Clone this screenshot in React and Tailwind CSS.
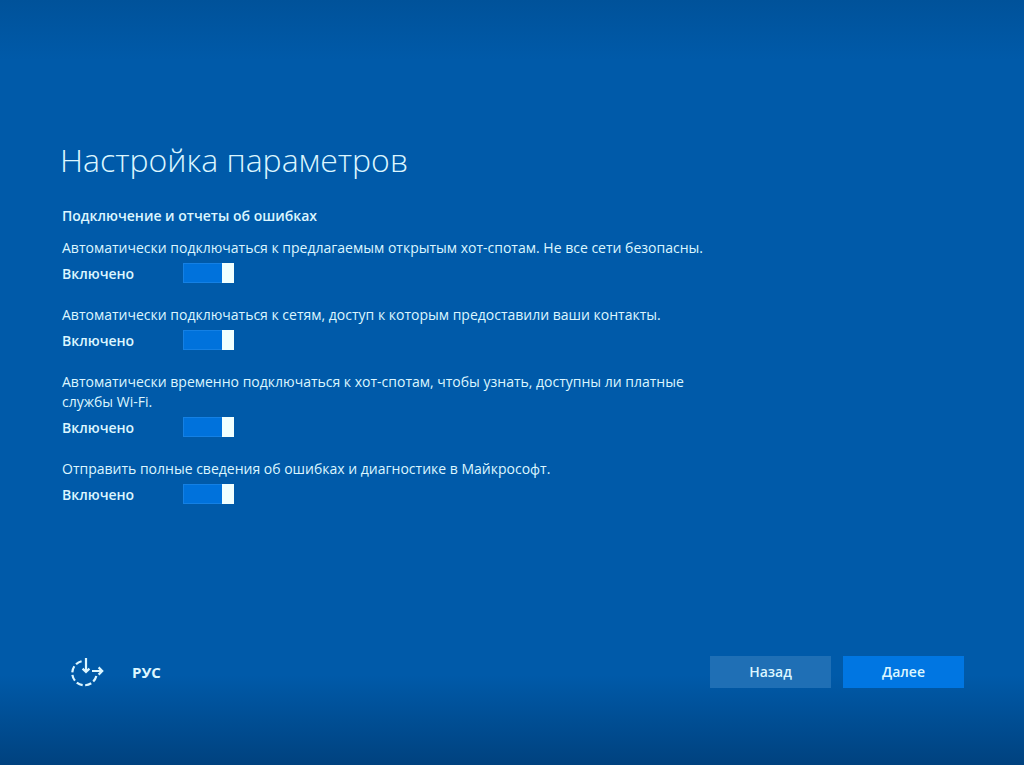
import { useState } from 'react';

const SETTINGS = [
    { id: 'hotspots', text: 'Автоматически подключаться к предлагаемым открытым хот-спотам. Не все сети безопасны.' },
    { id: 'contacts', text: 'Автоматически подключаться к сетям, доступ к которым предоставили ваши контакты.' },
    { id: 'paid', text: 'Автоматически временно подключаться к хот-спотам, чтобы узнать, доступны ли платные службы Wi-Fi.' },
    { id: 'reports', text: 'Отправить полные сведения об ошибках и диагностике в Майкрософт.' },
];

const ToggleSetting = ({ id, text }) => {
    const [on, setOn] = useState(true);

    return (
        <div>
            <p id={`${id}-text`}>{text}</p>
            <div className="mt-[5px] flex items-start">
                <label htmlFor={id} className="w-[121px] pt-px font-semibold">
                    {on ? 'Включено' : 'Отключено'}
                </label>
                <input
                    id={id}
                    type="checkbox"
                    role="switch"
                    aria-describedby={`${id}-text`}
                    checked={on}
                    onChange={(e) => setOn(e.target.checked)}
                    className="flex h-5 w-[51px] cursor-pointer appearance-none border border-[#1480e4] bg-[#004a91] before:-my-px before:-ml-px before:w-3 before:bg-[#f0ffff] checked:justify-end checked:bg-[#0072dc] checked:before:-mr-px checked:before:ml-0"
                />
            </div>
        </div>
    );
};

const EaseOfAccessIcon = () => (
    <svg viewBox="0 0 36 32" className="h-8 w-9" fill="none" stroke="currentColor" strokeWidth="2.2" aria-hidden="true">
        {/* Dashed ring, open in the upper right corner */}
        <path d="M13.6 5.2A12.2 12.2 0 1 0 28.5 19" strokeDasharray="6.4 2.6" />
        <path d="M18 2v13.5M14.6 12.6l3.4 3.4 3.4-3.4" />
        <path d="M24 15h10M30.6 11.4l3.6 3.6-3.6 3.6" />
    </svg>
);

const App = () => {
    return (
        <div className="flex min-h-screen flex-col bg-[#005aa9] bg-[linear-gradient(to_bottom,#00529a_0px,#005aa9_60px,#005aa9_calc(100%-90px),#00427f_100%)] px-[60px] pt-[136px] pb-[77px] font-['Open_Sans','Noto_Sans',sans-serif] text-sm leading-5 text-[#dcf6ff]">
            <main>
                <h1 className="text-[32px] leading-12 font-light">Настройка параметров</h1>
                <div className="px-0.5">
                    <h2 className="mt-[22px] font-semibold">Подключение и отчеты об ошибках</h2>
                    <div className="mt-3 flex max-w-[660px] flex-col gap-[21px]">
                        {SETTINGS.map((item) => (
                            <ToggleSetting key={item.id} {...item} />
                        ))}
                    </div>
                </div>
            </main>

            {/* Bottom bar */}
            <footer className="mt-auto flex items-center justify-between">
                <div className="flex items-center gap-7 pl-2">
                    <button type="button" aria-label="Специальные возможности">
                        <EaseOfAccessIcon />
                    </button>
                    <button type="button" className="text-[15px] font-bold">РУС</button>
                </div>
                <div className="flex gap-3 font-semibold">
                    <button type="button" className="h-8 w-[121px] bg-[#1f6fb5]">Назад</button>
                    <button type="button" className="h-8 w-[121px] bg-[#0076e2]">Далее</button>
                </div>
            </footer>
        </div>
    );
};

export default App;
